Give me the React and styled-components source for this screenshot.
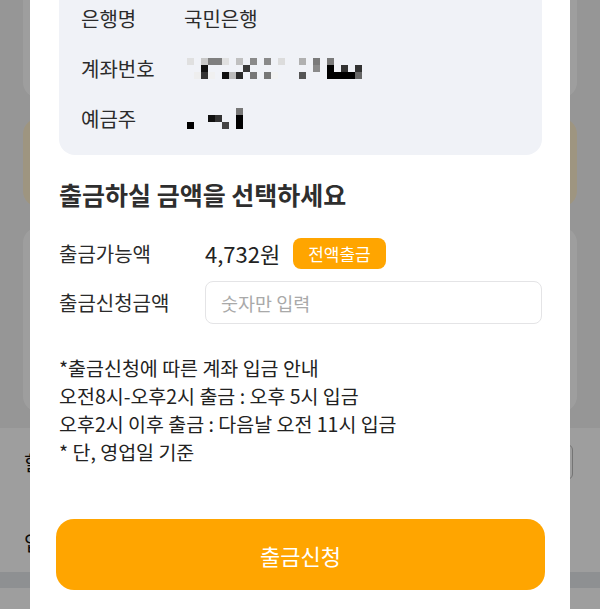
import React from "react";
import styled, { createGlobalStyle } from "styled-components";

const GlobalStyle = createGlobalStyle`
  html, body {
    margin: 0;
    padding: 0;
    height: 100%;
    overflow: hidden;
  }
  body {
    font-family: "Noto Sans CJK KR", "Noto Sans", sans-serif;
    background: #fff;
    color: #222;
  }
  * {
    box-sizing: border-box;
  }
`;

// page behind the dialog
const Page = styled.div`
  display: flex;
  flex-direction: column;
  height: 609px;
  overflow: hidden;
  background: #fff;
`;

const CardStack = styled.div`
  display: flex;
  flex-direction: column;
  gap: 20px;
  padding: 0 23px 16px;
  margin-top: -20px;
  background: #f3f3f3;
`;

const Card = styled.div`
  height: ${(props) => props.h}px;
  background: ${(props) => (props.tint ? "#fff0cf" : "#ffffff")};
  border-radius: 16px;
`;

const BottomBar = styled.div`
  height: 144px;
  background: #fff;
  display: flex;
  flex-direction: column;
  gap: 44px;
  padding: 16px 24px 0 24px;
`;

const BarRow = styled.div`
  display: flex;
  align-items: center;
  justify-content: space-between;
  font-size: 20px;
  color: #111;
  height: 36px;
`;

const SelectBox = styled.div`
  width: 120px;
  height: 36px;
  border: 1px solid #bbb;
  border-radius: 6px;
  margin-right: 3px;
`;

const Strip = styled.div`
  height: 16px;
  background: #e6e8ec;
`;

const Overlay = styled.div`
  position: fixed;
  inset: 0;
  background: rgba(0, 0, 0, 0.38);
`;

// dialog
const Modal = styled.div`
  position: fixed;
  left: 30px;
  top: -40px;
  bottom: -40px;
  width: 540px;
  background: #fff;
  padding: 21px 28px 0 29px;
  display: flex;
  flex-direction: column;
`;

const InfoBox = styled.div`
  background: #f0f2f7;
  border-radius: 16px;
  padding: 22px;
  display: flex;
  flex-direction: column;
  gap: 20px;
`;

const InfoRow = styled.div`
  display: grid;
  grid-template-columns: 103px 1fr;
  align-items: center;
  height: 30px;
  font-size: 20px;
  color: #2b2b2b;
`;

const Title = styled.h2`
  margin: 23px 0 0;
  font-size: 25px;
  line-height: 32px;
  font-weight: 700;
  color: #2e2e2e;
`;

const FormRow = styled.div`
  display: grid;
  grid-template-columns: 146px 1fr;
  align-items: center;
  height: ${(props) => props.h}px;
  margin-top: ${(props) => props.top}px;
  font-size: 20px;
  color: #2b2b2b;
`;

const ValueWrap = styled.div`
  display: flex;
  align-items: center;
  gap: 13px;
`;

const Amount = styled.span`
  font-size: 22px;
  color: #222;
`;

const Badge = styled.button`
  height: 31px;
  padding: 0 15px;
  border: none;
  border-radius: 8px;
  background: #ffa500;
  color: #fff;
  font-family: inherit;
  font-size: 17px;
`;

const Input = styled.input`
  width: 100%;
  height: 43px;
  border: 1px solid #e4e4e6;
  border-radius: 8px;
  padding: 0 15px;
  font-family: inherit;
  font-size: 18.5px;
  color: #222;
  outline: none;
  &::placeholder {
    color: #a9a9a9;
  }
`;

const Notice = styled.div`
  margin-top: 30px;
  font-size: 19.5px;
  line-height: 28px;
  color: #222;
`;

const SubmitButton = styled.button`
  margin: 53px -3px 0;
  height: 71px;
  border: none;
  border-radius: 18px;
  background: #ffa500;
  color: #fff;
  font-family: inherit;
  font-size: 22px;
`;

const CELL = 7;

const accountCells = [
  [0, 0, "#e0e0e0"], [2, 0, "#c8c8c8"], [3, 0, "#7f7f7f"], [4, 0, "#7f7f7f"],
  [5, 0, "#e0e0e0"], [7, 0, "#c0c0c0"], [9, 0, "#8a8a8a"], [11, 0, "#8a8a8a"],
  [13, 0, "#dcdcdc"], [16, 0, "#b0b0b0"], [18, 0, "#7a7a7a"], [20, 0, "#7a7a7a"],
  [2, 1, "#111"], [8, 1, "#3a3a3a"], [18, 1, "#8a8a8a"], [20, 1, "#000"],
  [22, 1, "#333"], [24, 1, "#333"],
  [1, 2, "#eee"], [2, 2, "#333"], [3, 2, "#f0f0f0"], [5, 2, "#111"],
  [6, 2, "#bbb"], [7, 2, "#2a2a2a"], [9, 2, "#777"], [11, 2, "#777"],
  [12, 2, "#f2f2f2"], [16, 2, "#555"], [20, 2, "#000"], [21, 2, "#000"],
  [22, 2, "#000"], [23, 2, "#000"], [24, 2, "#666"],
];

const nameCells = [
  [7, 0, "#777"],
  [3, 1, "#111"], [4, 1, "#333"], [7, 1, "#000"],
  [0, 2, "#000"], [5, 2, "#444"], [7, 2, "#000"],
];

function Mosaic({ cells, cols }) {
  return (
    <svg width={cols * CELL} height={3 * CELL} style={{ display: "block" }}>
      {cells.map(([c, r, color], i) => (
        <rect key={i} x={c * CELL} y={r * CELL} width={CELL} height={CELL} fill={color} />
      ))}
    </svg>
  );
}

const MosaicWrap = styled.div`
  margin-left: 3px;
`;

class App extends React.Component {
  render() {
    return (
      <>
        <GlobalStyle />
        <Page>
          <CardStack>
            <Card h={118} />
            <Card h={89} tint />
            <Card h={185} />
          </CardStack>
          <BottomBar>
            <BarRow>
              <span>할인</span>
              <SelectBox />
            </BarRow>
            <BarRow>
              <span>입금</span>
            </BarRow>
          </BottomBar>
          <Strip />
        </Page>
        <Overlay />
        <Modal>
          <InfoBox>
            <InfoRow>
              <span>은행명</span>
              <span>국민은행</span>
            </InfoRow>
            <InfoRow>
              <span>계좌번호</span>
              <MosaicWrap>
                <Mosaic cells={accountCells} cols={25} />
              </MosaicWrap>
            </InfoRow>
            <InfoRow>
              <span>예금주</span>
              <MosaicWrap>
                <Mosaic cells={nameCells} cols={8} />
              </MosaicWrap>
            </InfoRow>
          </InfoBox>
          <Title>출금하실 금액을 선택하세요</Title>
          <FormRow h={31} top={27}>
            <span>출금가능액</span>
            <ValueWrap>
              <Amount>4,732원</Amount>
              <Badge>전액출금</Badge>
            </ValueWrap>
          </FormRow>
          <FormRow h={43} top={13}>
            <span>출금신청금액</span>
            <Input placeholder="숫자만 입력" />
          </FormRow>
          <Notice>
            *출금신청에 따른 계좌 입금 안내
            <br />
            오전8시-오후2시 출금 : 오후 5시 입금
            <br />
            오후2시 이후 출금 : 다음날 오전 11시 입금
            <br />* 단, 영업일 기준
          </Notice>
          <SubmitButton>출금신청</SubmitButton>
        </Modal>
      </>
    );
  }
}

export default App;
